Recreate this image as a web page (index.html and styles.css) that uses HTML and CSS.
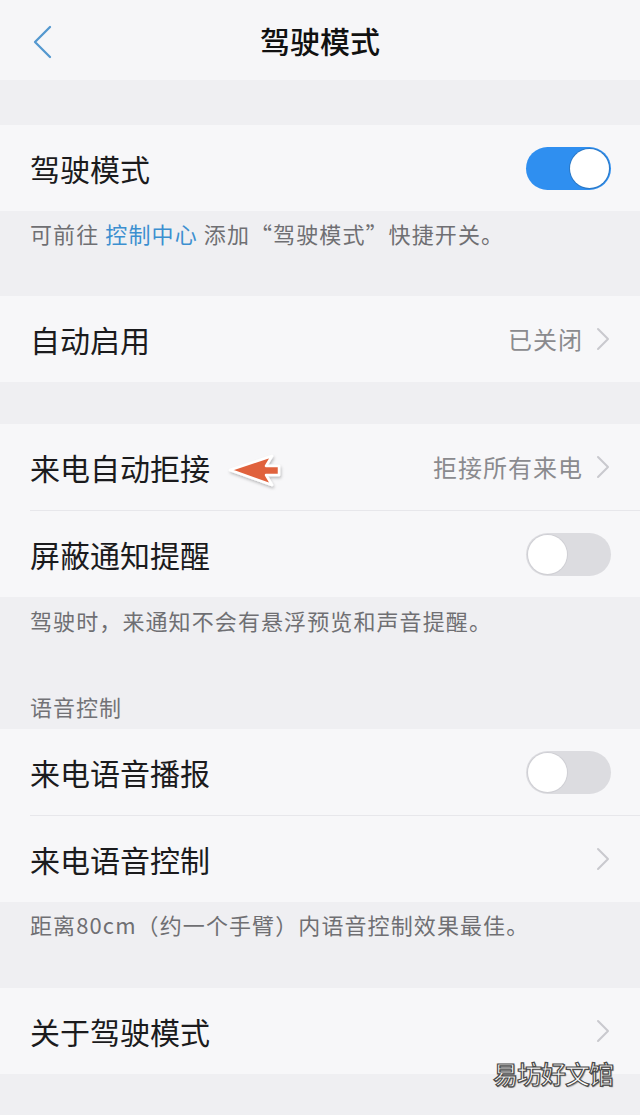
FILE: index.html
```html
<!DOCTYPE html>
<html lang="zh-CN">
<head>
<meta charset="utf-8">
<title>驾驶模式</title>
<link rel="stylesheet" href="styles.css">
</head>
<body>
<div class="page">
  <header class="topbar">
    <svg class="back" width="24" height="36" viewBox="0 0 24 36"><polyline points="19,3 4,18 19,33" fill="none" stroke="#5498cf" stroke-width="2.3" stroke-linecap="round" stroke-linejoin="round"/></svg>
    <h1 class="title">驾驶模式</h1>
  </header>

  <div class="spacer-top"></div>

  <section class="card">
    <div class="row">
      <span class="label">驾驶模式</span>
      <span class="switch on"><span class="knob"></span></span>
    </div>
  </section>
  <p class="note note-1">可前往 <span class="link">控制中心</span> 添加“驾驶模式”快捷开关。</p>

  <section class="card">
    <div class="row">
      <span class="label">自动启用</span>
      <span class="value">已关闭<svg class="chev" width="14" height="24" viewBox="0 0 14 24"><polyline points="2,2 12,12 2,22" fill="none" stroke="#c9c9ce" stroke-width="2" stroke-linecap="round" stroke-linejoin="round"/></svg></span>
    </div>
  </section>
  <div class="spacer-mid"></div>

  <section class="card">
    <div class="row">
      <span class="label">来电自动拒接</span>
      <span class="value">拒接所有来电<svg class="chev" width="14" height="24" viewBox="0 0 14 24"><polyline points="2,2 12,12 2,22" fill="none" stroke="#c9c9ce" stroke-width="2" stroke-linecap="round" stroke-linejoin="round"/></svg></span>
    </div>
    <div class="divider"></div>
    <div class="row">
      <span class="label">屏蔽通知提醒</span>
      <span class="switch"><span class="knob"></span></span>
    </div>
  </section>
  <p class="note note-2">驾驶时，来通知不会有悬浮预览和声音提醒。</p>
  <p class="section-head">语音控制</p>

  <section class="card">
    <div class="row">
      <span class="label">来电语音播报</span>
      <span class="switch"><span class="knob"></span></span>
    </div>
    <div class="divider"></div>
    <div class="row">
      <span class="label">来电语音控制</span>
      <span class="value"><svg class="chev" width="14" height="24" viewBox="0 0 14 24"><polyline points="2,2 12,12 2,22" fill="none" stroke="#c9c9ce" stroke-width="2" stroke-linecap="round" stroke-linejoin="round"/></svg></span>
    </div>
  </section>
  <p class="note note-3">距离80cm（约一个手臂）内语音控制效果最佳。</p>

  <section class="card">
    <div class="row">
      <span class="label">关于驾驶模式</span>
      <span class="value"><svg class="chev" width="14" height="24" viewBox="0 0 14 24"><polyline points="2,2 12,12 2,22" fill="none" stroke="#c9c9ce" stroke-width="2" stroke-linecap="round" stroke-linejoin="round"/></svg></span>
    </div>
  </section>

  <svg class="pointer" width="60" height="40" viewBox="0 0 60 40">
    <defs>
      <filter id="sh" x="-20%" y="-30%" width="140%" height="160%">
        <feDropShadow dx="1" dy="2" stdDeviation="1.5" flood-color="#000" flood-opacity="0.25"/>
      </filter>
    </defs>
    <polygon points="4,19 46,5 40,15 53,15 53,24 40,24 46,34" fill="#e0623c" stroke="#fff" stroke-width="2.5" stroke-linejoin="round" filter="url(#sh)"/>
  </svg>

  <div class="watermark">易坊好文馆</div>
</div>
</body>
</html>
```

FILE: styles.css
```css
* { box-sizing: border-box; }

html, body {
  margin: 0;
  padding: 0;
}

body {
  background: #efeff2;
  font-family: "Noto Sans CJK SC", "Noto Sans", sans-serif;
  color: #1b1b1d;
}

.page {
  position: relative;
  width: 640px;
  min-height: 1115px;
  background: #efeff2;
}

.topbar {
  position: relative;
  height: 80px;
  background: #f6f6f8;
  display: flex;
  align-items: center;
  justify-content: center;
}

.back {
  position: absolute;
  left: 31px;
  top: 24px;
}

.title {
  margin: 0;
  font-size: 30px;
  font-weight: 500;
  color: #111;
  line-height: 1;
}

.spacer-top { height: 45px; }
.spacer-mid { height: 42px; }

.card {
  background: #f7f7f9;
}

.row {
  height: 86px;
  display: flex;
  align-items: center;
  justify-content: space-between;
  padding: 0 29px 0 30px;
}

.label {
  font-size: 30px;
  line-height: 1;
  color: #1b1b1d;
}

.value {
  display: flex;
  align-items: center;
  gap: 13px;
  font-size: 24px;
  letter-spacing: 1px;
  color: #8a8a8e;
  line-height: 1;
}

.chev {
  display: block;
  margin-right: 1px;
}

.divider {
  height: 1px;
  margin-left: 30px;
  background: #e7e7eb;
}

.switch {
  position: relative;
  width: 85px;
  height: 43px;
  border-radius: 22px;
  background: #dcdce0;
  display: flex;
  align-items: center;
  padding: 0 2px;
}

.switch .knob {
  width: 39px;
  height: 39px;
  border-radius: 50%;
  background: #fff;
  box-shadow: 0 0 0 1px #cfcfd4;
}

.switch.on {
  background: #2f8ff0;
  justify-content: flex-end;
}

.switch.on .knob {
  box-shadow: 0 0 0 1px #2a78c6;
}

.note {
  margin: 0;
  padding: 0 30px;
  font-size: 22px;
  letter-spacing: 1.1px;
  line-height: 22px;
  color: #6f6f73;
}

.note-1 { padding-top: 11px; padding-bottom: 52px; }
.note-2 { padding-top: 12px; padding-bottom: 0; }
.note-3 { padding-top: 11px; padding-bottom: 53px; }

.link { color: #3c8fd0; }

.section-head {
  margin: 0;
  padding: 64px 30px 12px;
  font-size: 22px;
  letter-spacing: 1px;
  line-height: 22px;
  color: #727276;
}

.pointer {
  position: absolute;
  left: 226px;
  top: 451px;
}

.watermark {
  position: absolute;
  right: 27px;
  bottom: 29px;
  font-size: 25px;
  line-height: 1;
  color: #fff;
  font-weight: 500;
  -webkit-text-stroke: 1.2px #4a4a4a;
  text-shadow: 1px 1px 1px rgba(0,0,0,0.35);
  letter-spacing: -1px;
}
```
